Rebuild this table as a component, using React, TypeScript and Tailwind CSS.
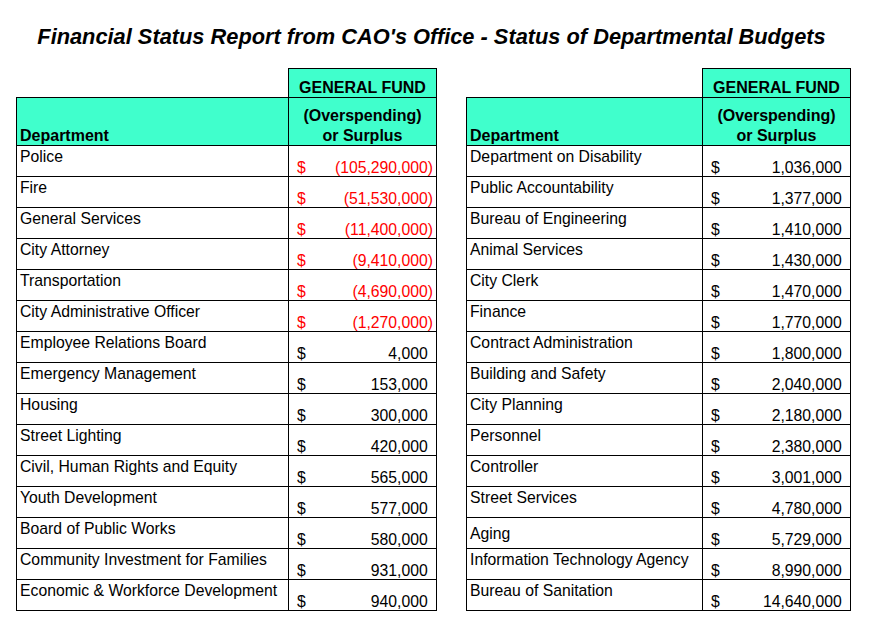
const LEFT = [
  ["Police", "(105,290,000)", true],
  ["Fire", "(51,530,000)", true],
  ["General Services", "(11,400,000)", true],
  ["City Attorney", "(9,410,000)", true],
  ["Transportation", "(4,690,000)", true],
  ["City Administrative Officer", "(1,270,000)", true],
  ["Employee Relations Board", "4,000", false],
  ["Emergency Management", "153,000", false],
  ["Housing", "300,000", false],
  ["Street Lighting", "420,000", false],
  ["Civil, Human Rights and Equity", "565,000", false],
  ["Youth Development", "577,000", false],
  ["Board of Public Works", "580,000", false],
  ["Community Investment for Families", "931,000", false],
  ["Economic & Workforce Development", "940,000", false],
] as const;

const RIGHT = [
  ["Department on Disability", "1,036,000"],
  ["Public Accountability", "1,377,000"],
  ["Bureau of Engineering", "1,410,000"],
  ["Animal Services", "1,430,000"],
  ["City Clerk", "1,470,000"],
  ["Finance", "1,770,000"],
  ["Contract Administration", "1,800,000"],
  ["Building and Safety", "2,040,000"],
  ["City Planning", "2,180,000"],
  ["Personnel", "2,380,000"],
  ["Controller", "3,001,000"],
  ["Street Services", "4,780,000"],
  ["Aging", "5,729,000"],
  ["Information Technology Agency", "8,990,000"],
  ["Bureau of Sanitation", "14,640,000"],
] as const;

type Row = { dept: string; amount: string; neg: boolean };

function BudgetTable({ rows, deptW, tableW }: { rows: Row[]; deptW: string; tableW: string }) {
  return (
    <div className={`flex flex-col ${tableW}`}>
      {/* general fund label sits above value column only */}
      <div className="flex h-[29px]">
        <div className={`${deptW} shrink-0`} />
        <div className="flex-1 border-l border-t border-r border-black bg-[#40ffcc] flex items-end justify-center font-bold leading-[19px]">
          GENERAL FUND
        </div>
      </div>

      <div className="flex h-[49px] border border-black bg-[#40ffcc] font-bold leading-[19.5px]">
        <div className={`${deptW} shrink-0 border-r border-black flex items-end pl-[3px]`}>
          Department
        </div>
        <div className="flex-1 flex flex-col items-center justify-end text-center">
          <span>(Overspending)</span>
          <span>or Surplus</span>
        </div>
      </div>

      {rows.map((r) => (
        <div key={r.dept} className="flex h-[31px] border-l border-r border-b border-black text-[15.75px]">
          {/* "Aging" sits lower in its cell in the source sheet */}
          <div
            className={`${deptW} shrink-0 border-r border-black pl-[3px] leading-[18px] whitespace-nowrap ${
              r.dept === "Aging" ? "pt-[7px]" : "pt-[2px]"
            }`}
          >
            {r.dept}
          </div>
          <div
            className={`flex-1 flex items-end justify-between pl-[8px] pr-[3px] leading-[16px] ${
              r.neg ? "text-[#ff0000]" : "text-black"
            }`}
          >
            <span>$</span>
            <span>
              {r.amount}
              {!r.neg && <span className="invisible">)</span>}
            </span>
          </div>
        </div>
      ))}
    </div>
  );
}

export default function App() {
  const left: Row[] = LEFT.map(([dept, amount, neg]) => ({ dept, amount, neg }));
  const right: Row[] = RIGHT.map(([dept, amount]) => ({ dept, amount, neg: false }));

  return (
    <div className="w-[871px] h-[638px] bg-white text-black font-['Liberation_Sans',Arial,sans-serif] text-[16px]">
      <h1 className="pt-[24px] pr-[8px] text-center text-[21.8px] leading-[25px] font-bold italic">
        Financial Status Report from CAO's Office - Status of Departmental Budgets
      </h1>

      <div className="flex gap-[29px] pl-[16px] mt-[19px]">
        <BudgetTable rows={left} deptW="w-[272px]" tableW="w-[421px]" />
        <BudgetTable rows={right} deptW="w-[236px]" tableW="w-[385px]" />
      </div>
    </div>
  );
}
